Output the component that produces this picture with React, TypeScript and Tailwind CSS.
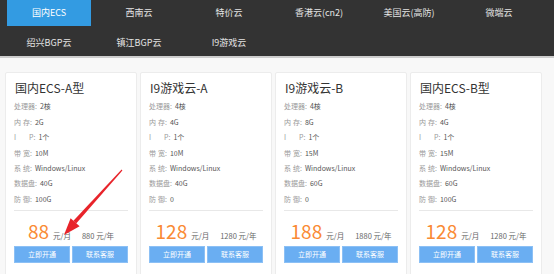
import React from 'react'

type Plan = {
  name: string
  cpu: string
  mem: string
  bw: string
  disk: string
  ddos: string
  month: string
  year: string
}

const TABS = ['国内ECS', '西南云', '特价云', '香港云(cn2)', '美国云(高防)', '微端云', '绍兴BGP云', '镇江BGP云', 'I9游戏云']

const PLANS: Plan[] = [
  { name: '国内ECS-A型', cpu: '2核', mem: '2G', bw: '10M', disk: '40G', ddos: '100G', month: '88', year: '880' },
  { name: 'I9游戏云-A', cpu: '4核', mem: '4G', bw: '10M', disk: '40G', ddos: '0', month: '128', year: '1280' },
  { name: 'I9游戏云-B', cpu: '4核', mem: '8G', bw: '15M', disk: '60G', ddos: '0', month: '188', year: '1880' },
  { name: '国内ECS-B型', cpu: '4核', mem: '4G', bw: '15M', disk: '60G', ddos: '100G', month: '128', year: '1280' },
]

// 两个字的标签中间留一点空
function Two({ a, b, gap = 'mr-[2px]' }: { a: string; b: string; gap?: string }) {
  return (
    <>
      <span className={gap}>{a}</span>
      {b}
    </>
  )
}

function Spec({ label, value }: { label: React.ReactNode; value: string }) {
  return (
    <div className="flex h-[15.4px] items-center text-[7px]">
      <span className="text-[#9a9a9a]">{label}</span>
      <span className="mr-[3px] text-[#9a9a9a]">:</span>
      <span className="text-[#555]">{value}</span>
    </div>
  )
}

function Card({ p }: { p: Plan }) {
  return (
    <div className="h-[230px] w-[132px] shrink-0 rounded-[2px] border border-[#ececec] bg-white px-[8px] pt-[7px]">
      <div className="h-[16px] pl-[1px] text-[12px] leading-[16px] text-[#333]">{p.name}</div>

      {/* 配置 */}
      <div className="mt-[3px]">
        <Spec label="处理器" value={p.cpu} />
        <Spec label={<Two a="内" b="存" />} value={p.mem} />
        <Spec label={<Two a="I" b="P" gap="mr-[13px]" />} value="1个" />
        <Spec label={<Two a="带" b="宽" />} value={p.bw} />
        <Spec label={<Two a="系" b="统" />} value="Windows/Linux" />
        <Spec label="数据盘" value={p.disk} />
        <Spec label={<Two a="防" b="御" />} value={p.ddos} />
      </div>

      <div className="mt-[3px] border-t border-[#e8e8e8]" />

      {/* 价格 */}
      <div className="mt-[8px] flex h-[24px] items-baseline justify-center text-[#666]">
        <span className="text-[19px] leading-[24px] text-[#fa8a34]">{p.month}</span>
        <span className="ml-[4px] text-[7.5px]">元/月</span>
        <span className="ml-[11px] text-[7.5px]">{p.year} 元/年</span>
      </div>

      <div className="mt-[3px] flex gap-[2px]">
        <button className="h-[17px] flex-1 border border-[#8cc0f5] bg-[#6aaef2] text-[7px] text-white">立即开通</button>
        <button className="h-[17px] flex-1 border border-[#8cc0f5] bg-[#6aaef2] text-[7px] text-white">联系客服</button>
      </div>
    </div>
  )
}

export default function App() {
  return (
    <div
      className="relative h-[274px] w-[554px] overflow-hidden bg-[#f8f8f8]"
      style={{ fontFamily: '"Microsoft YaHei", "Noto Sans CJK SC", sans-serif' }}
    >
      {/* 顶部分类 */}
      <nav className="h-[58px] border-b-2 border-[#cdcdcd] bg-[#333333] pl-[4px]">
        <div className="grid w-[540px] grid-cols-6 grid-rows-[26px_26px] gap-y-[4px]">
          {TABS.map((t, i) => (
            <div key={t} className="flex items-stretch">
              <div
                className={
                  i === 0
                    ? 'mx-[3px] flex flex-1 items-center justify-center bg-[#339be2] text-[9px] text-white'
                    : 'mx-[3px] flex flex-1 items-center justify-center text-[9px] text-[#e4e4e4]'
                }
              >
                {t}
              </div>
            </div>
          ))}
        </div>
      </nav>

      {/* 产品卡片 */}
      <div className="flex gap-[3px] pl-[5px] pt-[14px]">
        {PLANS.map((p) => (
          <Card key={p.name} p={p} />
        ))}
      </div>

      {/* 标注箭头 */}
      <svg className="pointer-events-none absolute left-0 top-0" width="554" height="274">
        <polygon points="121.6,169.6 122.4,170.4 76.2,223.4 73.4,220.8" fill="#e8232a" />
        <polygon points="64,235 70.6,218.2 79.6,226.2" fill="#e8232a" />
      </svg>
    </div>
  )
}
